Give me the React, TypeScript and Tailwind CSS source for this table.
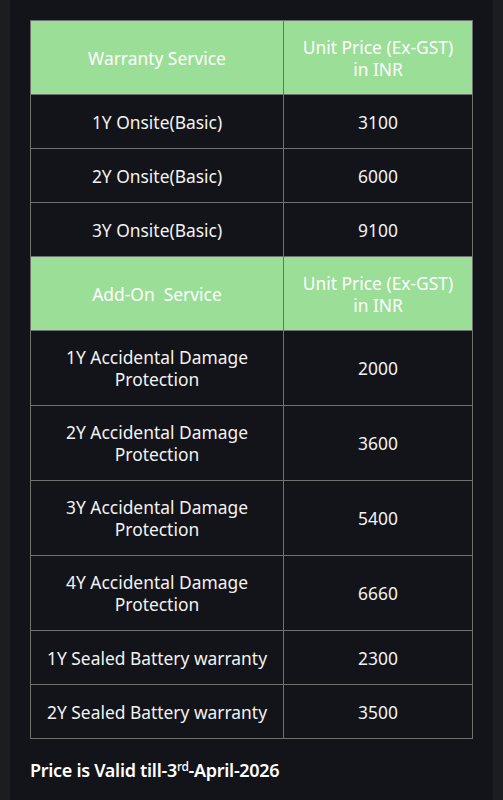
const warranty = [
  { name: "1Y Onsite(Basic)", price: "3100" },
  { name: "2Y Onsite(Basic)", price: "6000" },
  { name: "3Y Onsite(Basic)", price: "9100" },
];

const addons = [
  { name: ["1Y Accidental Damage", "Protection"], price: "2000" },
  { name: ["2Y Accidental Damage", "Protection"], price: "3600" },
  { name: ["3Y Accidental Damage", "Protection"], price: "5400" },
  { name: ["4Y Accidental Damage", "Protection"], price: "6660" },
  { name: ["1Y Sealed Battery warranty"], price: "2300" },
  { name: ["2Y Sealed Battery warranty"], price: "3500" },
];

function HeaderRow({ title }: { title: string }) {
  return (
    <tr className="h-[74px] bg-[#9bde98] text-white">
      <td className="border border-[#707070] w-[253px] whitespace-pre">{title}</td>
      <td className="border border-[#707070]">
        Unit Price (Ex-GST)
        <br />
        in INR
      </td>
    </tr>
  );
}

export default function App() {
  return (
    <div className="w-[503px] h-[800px] bg-[#1c1d21] px-[10px]" style={{ fontFamily: '"Noto Sans", "Open Sans", sans-serif' }}>
      <div className="h-full bg-[#131419] pt-[20px] px-[20px]">
        <table className="w-[443px] border-collapse text-center text-[17.4px] leading-[22px] text-[#f2f2f2]">
          <tbody>
            <HeaderRow title="Warranty Service" />
            {warranty.map((r) => (
              <tr key={r.name} className="h-[54px]">
                <td className="border border-[#707070]">{r.name}</td>
                <td className="border border-[#707070]">{r.price}</td>
              </tr>
            ))}
            <HeaderRow title="Add-On  Service" />
            {addons.map((r) => (
              <tr key={r.name.join(" ")} className={r.name.length > 1 ? "h-[75px]" : "h-[54px]"}>
                <td className="border border-[#707070]">
                  {r.name.map((l, i) => (
                    <div key={i}>{l}</div>
                  ))}
                </td>
                <td className="border border-[#707070]">{r.price}</td>
              </tr>
            ))}
          </tbody>
        </table>
        <p className="mt-[18px] text-[18px] font-semibold text-white tracking-[-0.3px]">
          Price is Valid till-3<sup className="text-[12px] font-medium">rd</sup>-April-2026
        </p>
      </div>
    </div>
  );
}
